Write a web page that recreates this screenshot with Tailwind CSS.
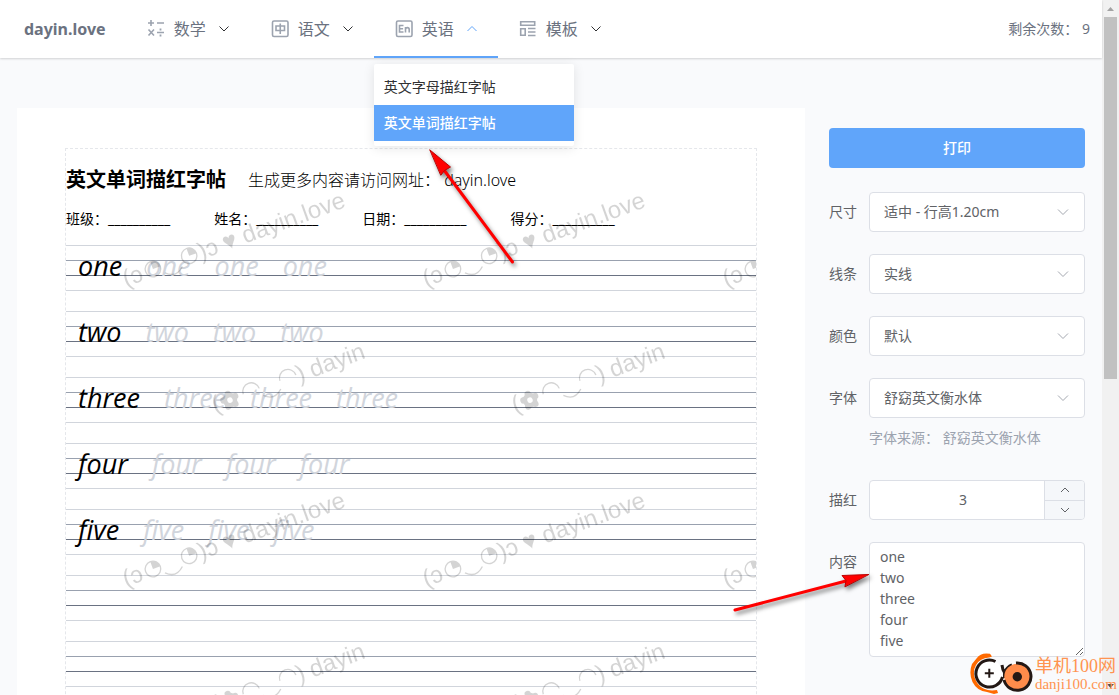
<!DOCTYPE html>
<html lang="zh-CN">
<head>
<meta charset="utf-8">
<meta name="viewport" content="width=device-width, initial-scale=1">
<title>dayin.love</title>
<script src="https://cdn.jsdelivr.net/npm/@tailwindcss/browser@4"></script>
</head>
<body class="relative flex h-screen overflow-hidden bg-[#f9fafc] font-['Noto_Sans','Noto_Sans_CJK_SC',sans-serif] text-sm text-[#606266]">

<div class="flex min-w-0 flex-1 flex-col">
  <header class="relative z-10 flex h-[58px] shrink-0 items-center bg-white pr-3 pl-6 text-[#6b7280] shadow-[0_1px_2px_rgba(0,0,0,0.16)]">
    <a href="#" class="mr-5 text-base font-bold">dayin.love</a>
    <nav class="flex h-full flex-1">
      <button class="flex h-full w-31 items-center pl-5 text-base">
        <svg class="mr-2 size-5 text-[#9ca3af]" viewBox="0 0 20 20" fill="none" stroke="currentColor" stroke-width="1.6"><path d="M5 1v6M2 4h6M11 4h7M2.500 10.500l5.500 6M8 10.500l-5.500 6M11 13.500h7"/><path d="M13.600 10.500h1.800M13.600 16.500h1.800" stroke-width="2"/></svg>
        数学
        <svg class="ml-3 h-3 w-3" viewBox="0 0 12 12" fill="none" stroke="#303133"><path d="M1.500 3.500 6 8l4.500-4.500"/></svg>
      </button>
      <button class="flex h-full w-31 items-center pl-5 text-base">
        <svg class="mr-2 size-5 text-[#9ca3af]" viewBox="0 0 20 20" fill="none" stroke="currentColor" stroke-width="1.600"><rect x="2.500" y="2" width="15.500" height="15.500" rx="1.500"/><path d="M6 7h8.500v4.500H6zM10.250 4.500v10.500"/></svg>
        语文
        <svg class="ml-3 h-3 w-3" viewBox="0 0 12 12" fill="none" stroke="#303133"><path d="M1.500 3.500 6 8l4.500-4.500"/></svg>
      </button>
      <div class="relative h-full w-31">
        <button class="flex h-full w-full items-center border-b-2 border-[#60a5fa] pt-[2px] pl-5 text-base" aria-expanded="true">
          <svg class="mr-2 size-5 text-[#9ca3af]" viewBox="0 0 20 20" fill="none" stroke="currentColor" stroke-width="1.600"><rect x="2.500" y="2" width="15.500" height="15.500" rx="1.500"/><path d="M9.500 6.500h-4v6.500h4M5.500 9.700h3.600M11.500 13.500V8M11.500 10.500c0-2.500 3.700-2.500 3.700 0v3"/></svg>
          英语
          <svg class="ml-3 h-3 w-3" viewBox="0 0 12 12" fill="none" stroke="#60a5fa"><path d="M1.500 8 6 3.500 10.500 8"/></svg>
        </button>
        <div class="absolute top-full left-0 mt-[6px] w-50 rounded-xs bg-white py-[5px] text-sm text-[#303133] shadow-[0_2px_12px_rgba(0,0,0,0.1)]">
          <a href="#" class="flex h-9 items-center px-[10px]">英文字母描红字帖</a>
          <a href="#" class="flex h-9 items-center bg-[#60a5fa] px-[10px] font-medium text-white">英文单词描红字帖</a>
        </div>
      </div>
      <button class="flex h-full w-31 items-center pl-5 text-base">
        <svg class="mr-2 size-5 text-[#9ca3af]" viewBox="0 0 20 20" fill="none" stroke="currentColor" stroke-width="1.600"><path d="M2.700 2.700h14v3.600h-14zM2.700 9.700h4.500v6.500H2.700zM10 9.500h7.500M10 13h7.500M10 16.500h7.500"/></svg>
        模板
        <svg class="ml-3 h-3 w-3" viewBox="0 0 12 12" fill="none" stroke="#303133"><path d="M1.500 3.500 6 8l4.500-4.500"/></svg>
      </button>
    </nav>
    <p>剩余次数： 9</p>
  </header>

  <main class="flex items-start gap-6 px-[17px] pt-[50px]">
    <section class="min-w-0 flex-1 bg-white px-12 py-10">
      <div class="relative border border-dashed border-gray-200 text-black">
        <div class="flex items-center pt-[15px]">
          <h1 class="text-xl leading-8 font-bold">英文单词描红字帖</h1>
          <p class="ml-[22px] text-base font-light">生成更多内容请访问网址： dayin.love</p>
        </div>
        <div class="mt-[13px] mb-[15px] flex gap-11 leading-5">
          <span>班级：__________</span><span>姓名：__________</span><span>日期：__________</span><span>得分：__________</span>
        </div>
        <div id="rows" class="flex flex-col gap-5 pt-px"></div>
        <svg class="pointer-events-none absolute inset-0 h-full w-full" aria-hidden="true">
          <defs>
            <pattern id="mark" x="20" y="0" width="300" height="300" patternUnits="userSpaceOnUse">
              <g class="font-['Liberation_Sans','DejaVu_Sans',sans-serif] text-2xl" fill="#000" opacity="0.17">
                <g transform="translate(40 138) rotate(-20)">
                  <text><tspan x="0">(ɔ</tspan><tspan x="80">)ɔ</tspan><tspan x="106">♥</tspan><tspan x="127">dayin.love</tspan></text>
                  <g fill="none" stroke="#000" stroke-width="1.300"><circle cx="31.500" cy="-7.700" r="7.800"/><circle cx="70" cy="-7.700" r="7.800"/><path d="M41.500 0Q50.500 9 60 0"/></g>
                  <path d="M31.500-7.700v-7.800a7.800 7.800 0 0 1 7.800 7.800zM70-7.700v-7.800a7.800 7.800 0 0 1 7.800 7.800z"/>
                </g>
                <g transform="translate(129 264) rotate(-20)">
                  <text><tspan x="0">(</tspan><tspan x="90">)</tspan><tspan x="104">dayin</tspan></text>
                  <g fill="none" stroke="#000" stroke-width="1.300"><path d="M33-8a8.500 8.500 0 0 1 17 0M72-8a8.500 8.500 0 0 1 17 0M51.500 0Q60.500 9 70 0"/></g>
                  <g fill="none" stroke="#000" stroke-width="4.500"><circle cx="18.500" cy="-7" r="5"/></g>
                  <circle cx="18.500" cy="-13.500" r="3.200"/><circle cx="24.700" cy="-9" r="3.200"/><circle cx="22.300" cy="-1.700" r="3.200"/><circle cx="14.700" cy="-1.700" r="3.200"/><circle cx="12.300" cy="-9" r="3.200"/>
                </g>
              </g>
            </pattern>
          </defs>
          <rect width="100%" height="100%" fill="url(#mark)"/>
        </svg>
      </div>
    </section>

    <form class="w-64 shrink-0 pt-5">
      <button type="button" class="mb-6 h-10 w-full rounded bg-[#60a5fa] font-medium text-white">打印</button>
      <div class="mb-[22px] flex items-center">
        <label for="size" class="w-10">尺寸</label>
        <div class="relative flex-1">
          <select id="size" class="h-10 w-full appearance-none rounded border border-[#dcdfe6] bg-white pl-[14px]"><option>适中 - 行高1.20cm</option></select>
          <svg class="pointer-events-none absolute top-[14px] right-4 size-3" viewBox="0 0 12 12" fill="none" stroke="#a4a8b0"><path d="M1 3.500 6 8.500l5-5"/></svg>
        </div>
      </div>
      <div class="mb-[22px] flex items-center">
        <label for="line" class="w-10">线条</label>
        <div class="relative flex-1">
          <select id="line" class="h-10 w-full appearance-none rounded border border-[#dcdfe6] bg-white pl-[14px]"><option>实线</option></select>
          <svg class="pointer-events-none absolute top-[14px] right-4 size-3" viewBox="0 0 12 12" fill="none" stroke="#a4a8b0"><path d="M1 3.500 6 8.500l5-5"/></svg>
        </div>
      </div>
      <div class="mb-[22px] flex items-center">
        <label for="color" class="w-10">颜色</label>
        <div class="relative flex-1">
          <select id="color" class="h-10 w-full appearance-none rounded border border-[#dcdfe6] bg-white pl-[14px]"><option>默认</option></select>
          <svg class="pointer-events-none absolute top-[14px] right-4 size-3" viewBox="0 0 12 12" fill="none" stroke="#a4a8b0"><path d="M1 3.500 6 8.500l5-5"/></svg>
        </div>
      </div>
      <div class="flex items-center">
        <label for="font" class="w-10">字体</label>
        <div class="relative flex-1">
          <select id="font" class="h-10 w-full appearance-none rounded border border-[#dcdfe6] bg-white pl-[14px]"><option>舒窈英文衡水体</option></select>
          <svg class="pointer-events-none absolute top-[14px] right-4 size-3" viewBox="0 0 12 12" fill="none" stroke="#a4a8b0"><path d="M1 3.500 6 8.500l5-5"/></svg>
        </div>
      </div>
      <p class="mb-[22px] ml-10 h-10 leading-10 text-[#9ca3af]">字体来源： 舒窈英文衡水体</p>
      <div class="mb-[22px] flex items-center">
        <label for="trace" class="w-10">描红</label>
        <div class="flex h-10 min-w-0 flex-1 overflow-hidden rounded border border-[#dcdfe6] bg-white">
          <input id="trace" type="text" inputmode="numeric" value="3" class="min-w-0 flex-1 pl-3 text-center">
          <div class="flex w-10 flex-col border-l border-[#dcdfe6] bg-[#f5f7fa]">
            <button type="button" aria-label="增加" class="flex flex-1 items-center justify-center border-b border-[#dcdfe6]"><svg class="size-3" viewBox="0 0 12 12" fill="none" stroke="#606266"><path d="M2 8l4-4 4 4"/></svg></button>
            <button type="button" aria-label="减少" class="flex flex-1 items-center justify-center"><svg class="size-3" viewBox="0 0 12 12" fill="none" stroke="#606266"><path d="M2 4l4 4 4-4"/></svg></button>
          </div>
        </div>
      </div>
      <div class="flex items-start">
        <label for="content" class="w-10 leading-10">内容</label>
        <textarea id="content" rows="5" class="h-[115px] min-w-0 flex-1 resize-y overflow-hidden rounded border border-[#dcdfe6] bg-white px-[10px] py-[3px] leading-[21px]">one
two
three
four
five</textarea>
      </div>
    </form>
  </main>
</div>

<!-- Scrollbar -->
<div class="flex w-[17px] shrink-0 flex-col items-center bg-[#f1f1f1]" aria-hidden="true">
  <svg class="h-[17px] w-full shrink-0" viewBox="0 0 17 17"><path d="M5 11h7L8.500 7z" fill="#a3a3a3"/></svg>
  <div class="h-[362px] w-[13px] bg-[#c1c1c1]"></div>
  <svg class="mt-auto h-[17px] w-full shrink-0" viewBox="0 0 17 17"><path d="M5 6h7l-3.500 4z" fill="#505050"/></svg>
</div>

<!-- Pointer arrows -->
<svg class="pointer-events-none absolute inset-0 z-20 h-full w-full drop-shadow-[2px_3px_2px_rgba(0,0,0,0.5)]" fill="#f00" stroke="#f00" stroke-linecap="round" aria-hidden="true">
  <path d="M444 170 512.500 262" stroke-width="3"/>
  <path d="M430 150 450.500 167 444.500 170.500 441 175z" stroke="#b00" stroke-width="1"/>
  <path d="M735 610 846 581" stroke-width="3"/>
  <path d="M868.500 574.500 842 575.500 846 580.500 845 586.500z" stroke="#b00" stroke-width="1"/>
</svg>

<!-- Site badge -->
<div class="pointer-events-none absolute right-0.5 bottom-0 z-30 flex h-[42px] items-center font-['Liberation_Serif','Noto_Sans_CJK_SC',serif] text-[#ff9450]">
  <svg class="h-[42px] w-[65px]" viewBox="0 0 65 42" fill="none">
    <path d="M20 .8Q11-1 6.500 5.500L2 11Q-1.500 20 2.500 29 7 38 17 39l7 2 4-1-1-3Q14 39 8 31 1 21 6 12 10 5 19 4.500l3-1z" fill="#ff6a00"/>
    <circle cx="19.300" cy="20.300" r="13.300" fill="#fff"/>
    <path d="M25.500 8.500A13.500 13.500 0 1 0 32.500 24M32 12Q32.500 17 34.500 19.500M42 12Q37 14 34.500 19.500V25" stroke="#231815" stroke-width="3"/>
    <path d="M14.800 20.300h9M19.300 15.800v9" stroke="#231815" stroke-width="2"/>
    <circle cx="47.300" cy="23.700" r="13" fill="#ff8c4b"/>
    <path d="M46 10A13.700 13.700 0 1 1 34 27" stroke="#231815" stroke-width="3"/>
    <circle cx="47.300" cy="23.700" r="4.700" fill="#231815"/>
  </svg>
  <div class="flex flex-col">
    <span class="text-lg leading-5">单机100网</span>
    <span class="text-[15px] leading-4">danji100.com</span>
  </div>
</div>

<script>
  const rows = document.getElementById('rows');
  for (const word of ['one', 'two', 'three', 'four', 'five', '', '', '']) {
    const row = document.createElement('div');
    row.className = 'relative h-[46px]';
    row.innerHTML = `
      <div class="h-[15px] border-t border-gray-300"></div>
      <div class="h-[15px] border-t border-gray-400"></div>
      <div class="h-[15px] border-t border-gray-500"></div>
      <div class="border-t border-gray-300"></div>
      <div class="absolute top-0 left-3 flex gap-6 font-['Open_Sans','Noto_Sans',sans-serif] text-[27px] leading-[42px] italic">
        ${word ? `<span>${word}</span>` + `<span class="font-medium text-gray-300">${word}</span>`.repeat(3) : ''}
      </div>`;
    rows.append(row);
  }
</script>
</body>
</html>
